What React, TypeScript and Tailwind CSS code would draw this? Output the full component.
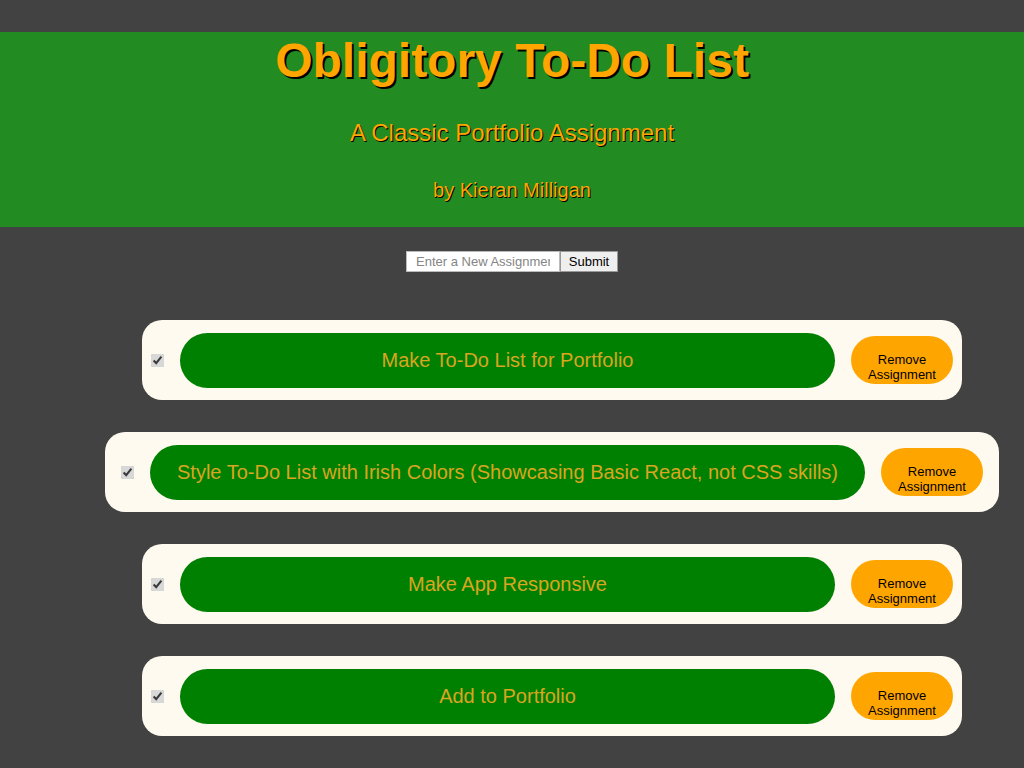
import { useState } from 'react';

interface Assignment {
  id: number;
  title: string;
  done: boolean;
}

const initial: Assignment[] = [
  { id: 1, title: 'Make To-Do List for Portfolio', done: true },
  { id: 2, title: 'Style To-Do List with Irish Colors (Showcasing Basic React, not CSS skills)', done: true },
  { id: 3, title: 'Make App Responsive', done: true },
  { id: 4, title: 'Add to Portfolio', done: true },
];

const App = () => {
  const [items, setItems] = useState<Assignment[]>(initial);
  const [text, setText] = useState('');

  const addItem = () => {
    if (!text.trim()) return;
    setItems([...items, { id: Date.now(), title: text, done: false }]);
    setText('');
  };

  return (
    <div className="min-h-screen bg-[#424242] pt-[32px] pb-8 font-['Liberation_Sans',Arial,sans-serif]">
      <header className="bg-[#228b22] h-[195px] text-center text-[#ffa500]">
        <h1 className="pt-[1px] text-[48px] leading-[55px] font-bold [text-shadow:2px_2px_0_#000]">
          Obligitory To-Do List
        </h1>
        <h2 className="mt-[31px] text-[24px] leading-[28px] [text-shadow:1px_1px_0_#000]">
          A Classic Portfolio Assignment
        </h2>
        <h3 className="mt-[32px] text-[20px] leading-[23px] [text-shadow:1px_1px_0_#000]">
          by Kieran Milligan
        </h3>
      </header>

      <div className="mt-[24px] flex justify-center">
        <input
          value={text}
          onChange={(e) => setText(e.target.value)}
          placeholder="Enter a New Assignment"
          className="w-[154px] h-[21px] bg-white border border-[#bbb] px-[9px] text-[13px] text-black placeholder:text-[#858585]"
        />
        <button
          onClick={addItem}
          className="w-[58px] h-[21px] bg-[#efefef] border border-[#999] text-[13px] text-black"
        >
          Submit
        </button>
      </div>

      <ul className="mt-[48px] pl-[80px] flex flex-col items-center gap-[32px]">
        {items.map((item) => (
          <li
            key={item.id}
            className={`h-[80px] w-fit flex items-center bg-[#fffaf0] rounded-[20px] ${
              item.title.length > 40 ? 'pl-[12px] pr-[16px]' : 'pl-[5px] pr-[9px]'
            }`}
          >
            <input
              type="checkbox"
              checked={item.done}
              onChange={() =>
                setItems(items.map((i) => (i.id === item.id ? { ...i, done: !i.done } : i)))
              }
              className="w-[13px] h-[13px] m-[3px_3px_3px_4px] accent-[#d8d8d8]"
            />
            <div className="ml-[13px] h-[55px] min-w-[655px] px-[27px] mt-[1px] pb-[1px] flex items-center justify-center rounded-full bg-[#008000] text-[20px] text-[#daa520] whitespace-nowrap">
              {item.title}
            </div>
            <button
              onClick={() => setItems(items.filter((i) => i.id !== item.id))}
              className="ml-[16px] w-[102px] h-[48px] pt-[13px] rounded-full bg-[#ffa500] text-[13px] leading-[15px] text-black"
            >
              Remove
              <br />
              Assignment
            </button>
          </li>
        ))}
      </ul>
    </div>
  );
};

export default App;
